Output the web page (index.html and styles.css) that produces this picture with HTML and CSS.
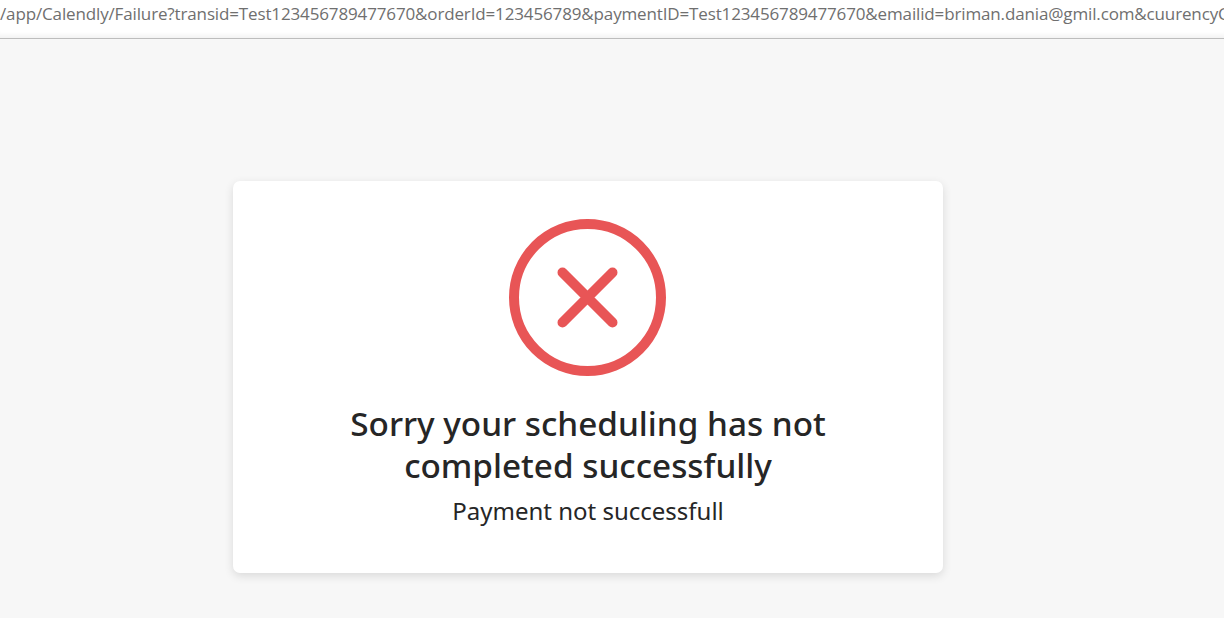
FILE: index.html
```html
<!DOCTYPE html>
<html lang="en">
<head>
    <meta charset="UTF-8">
    <meta name="viewport" content="width=device-width, initial-scale=1.0">
    <title>Payment Failure</title>
    <link rel="stylesheet" href="styles.css">
</head>
<body>
    <div class="address-bar">
        <span class="address-text">/app/Calendly/Failure?transid=Test123456789477670&amp;orderId=123456789&amp;paymentID=Test123456789477670&amp;emailid=briman.dania@gmil.com&amp;cuurencyC</span>
    </div>
    <main class="page">
        <div class="card">
            <svg class="status-icon" viewBox="0 0 157 157" width="157" height="157" aria-hidden="true">
                <circle cx="78.5" cy="78.5" r="73.5" fill="none" stroke="#e85556" stroke-width="10"/>
                <path d="M53.5 53.5 L103.5 103.5 M103.5 53.5 L53.5 103.5" fill="none" stroke="#e85556" stroke-width="10" stroke-linecap="round"/>
            </svg>
            <h1 class="title">Sorry your scheduling has not completed successfully</h1>
            <p class="subtitle">Payment not successfull</p>
        </div>
    </main>
</body>
</html>
```

FILE: styles.css
```css
html, body {
    margin: 0;
    height: 100%;
    overflow: hidden;
}
body {
    font-family: "Noto Sans", "Open Sans", Arial, sans-serif;
    background-color: #f7f7f7;
    color: #262626;
}
.address-bar {
    height: 38px;
    background-color: #fff;
    border-bottom: 1px solid #bdbdbd;
    box-shadow: inset 0 -6px 4px -3px #f3f3f3;
    overflow: hidden;
    white-space: nowrap;
}
.address-text {
    display: block;
    font-family: "Open Sans", Arial, sans-serif;
    font-size: 17px;
    letter-spacing: -0.14px;
    line-height: 28px;
    color: #6f6f6f;
}
.page {
    padding: 142px 0 0 233px;
}
.card {
    box-sizing: border-box;
    width: 710px;
    height: 392px;
    padding-top: 38px;
    background-color: #fff;
    border-radius: 7px;
    box-shadow: 0 3px 10px rgba(0, 0, 0, 0.12);
    display: flex;
    flex-direction: column;
    align-items: center;
    text-align: center;
}
.status-icon {
    display: block;
    margin-right: 1px;
}
.title {
    width: 500px;
    margin: 26px 0 0;
    font-size: 33.3px;
    line-height: 42px;
    font-weight: 500;
}
.subtitle {
    margin: 9px 0 0;
    font-size: 24px;
    line-height: 32px;
}
```
